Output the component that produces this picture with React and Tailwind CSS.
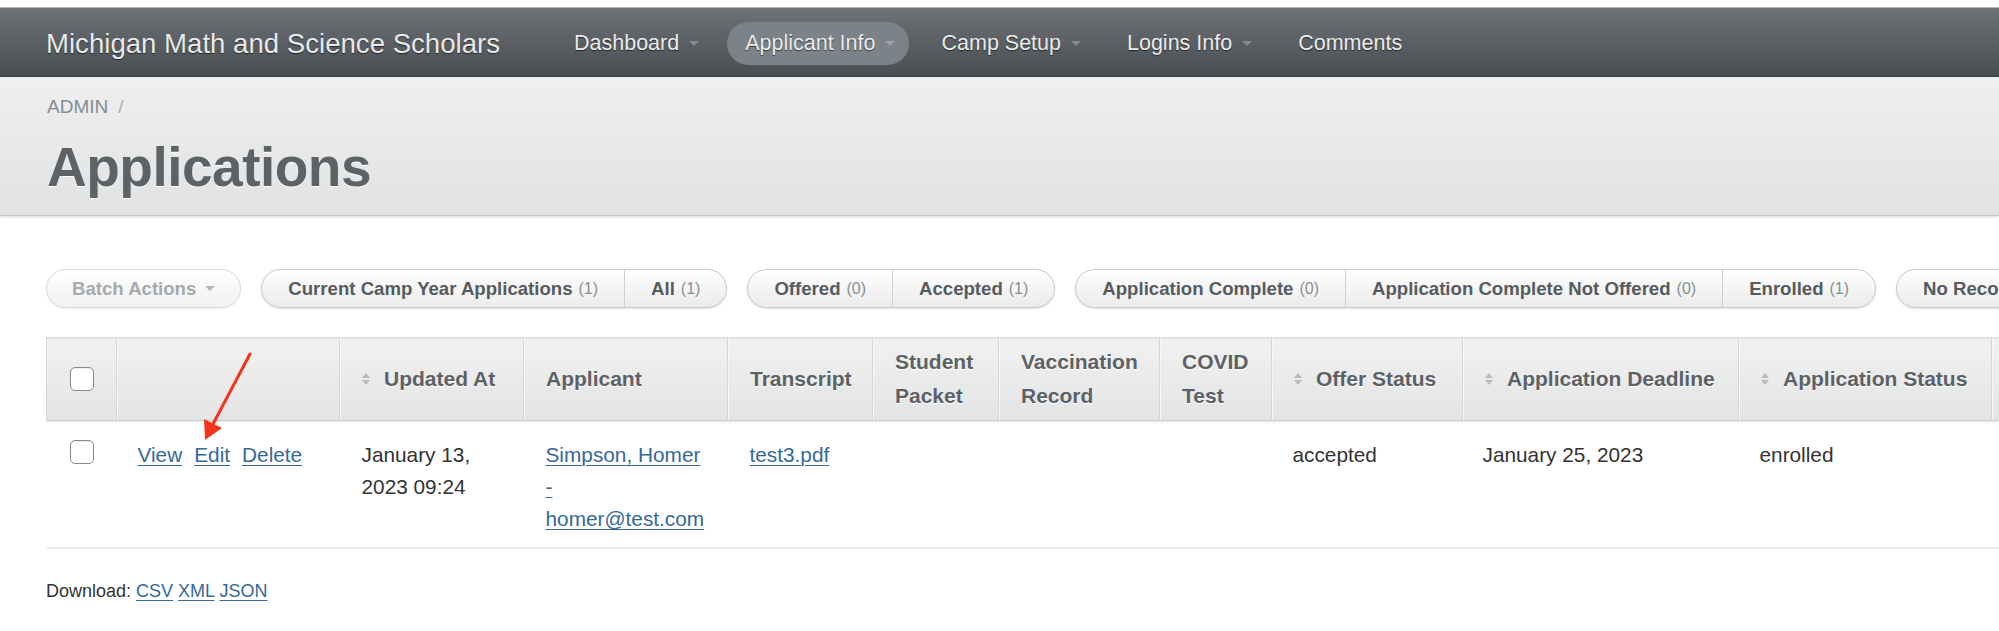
import React from "react";

const FONT = "font-['Liberation_Sans',Arial,sans-serif]";

function Caret({ color = "border-t-[#8b9095]", className = "" }) {
  return (
    <span
      className={`inline-block w-0 h-0 border-l-[5px] border-r-[5px] border-t-[5px] border-l-transparent border-r-transparent ${color} ${className}`}
    />
  );
}

function SortArrows() {
  return (
    <span className="inline-flex flex-col gap-[2px] mr-[14px] shrink-0">
      <span className="w-0 h-0 border-l-[4px] border-r-[4px] border-b-[5px] border-l-transparent border-r-transparent border-b-[#b9bcbf]" />
      <span className="w-0 h-0 border-l-[4px] border-r-[4px] border-t-[5px] border-l-transparent border-r-transparent border-t-[#b9bcbf]" />
    </span>
  );
}

function Checkbox() {
  return (
    <span className="block w-[24px] h-[24px] rounded-[5px] border-[1.5px] border-[#8a8a8a] bg-white shadow-[inset_0_1px_1px_rgba(0,0,0,0.08)]" />
  );
}

function NavItem({ label, active, caret = true }) {
  return (
    <div
      className={`flex items-center h-[43px] pl-[18px] ${caret ? "pr-[14px]" : "pr-[18px]"} rounded-full ${
        active ? "bg-[#7b8288]" : ""
      }`}
    >
      <span className="text-[21.5px] text-[#ececec] [text-shadow:0_1px_1px_rgba(0,0,0,0.6)]">{label}</span>
      {caret && <Caret className="ml-[10px]" color={active ? "border-t-[#9da3a8]" : "border-t-[#858a8f]"} />}
    </div>
  );
}

function Seg({ label, count, first }) {
  return (
    <div
      className={`flex items-center px-[26px] ${first ? "" : "border-l border-[#cfcfcf]"} text-[18.6px] font-bold text-[#565b60]`}
    >
      {label}
      <span className="ml-[6px] font-normal text-[16px] text-[#8a8e92]">({count})</span>
    </div>
  );
}

function Group({ items }) {
  return (
    <div className="flex h-[39px] shrink-0 rounded-full border border-[#c9c9c9] bg-linear-to-b from-white to-[#ebebeb] shadow-[0_1px_2px_rgba(0,0,0,0.12)] overflow-hidden">
      {items.map((it, i) => (
        <Seg key={it[0]} label={it[0]} count={it[1]} first={i === 0} />
      ))}
    </div>
  );
}

function Th({ children, w, sort, first }) {
  return (
    <th
      className={`${w} px-[22px] text-left align-middle font-bold text-[21px] leading-[34px] text-[#5c6166] [text-shadow:0_1px_0_#fff] ${
        first ? "" : "border-l border-[#d5d6d7] shadow-[inset_1px_0_0_#f7f7f7]"
      }`}
    >
      {sort ? (
        <span className="flex items-center whitespace-nowrap">
          <SortArrows />
          {children}
        </span>
      ) : (
        children
      )}
    </th>
  );
}

const link = "text-[#35699a] underline underline-offset-[3px] decoration-[1px]";

export default function App() {
  return (
    <div className={`${FONT} relative w-[1999px] h-[631px] overflow-hidden bg-white`}>
      {/* Top nav */}
      <div className="mt-[7px] h-[70px] flex items-center pt-[3px] px-[46px] bg-linear-to-b from-[#6d7277] to-[#4a4e52] border-t border-[#b4b7ba] border-b border-b-[#3d4043]">
        <span className="text-[27.6px] text-[#e9e9e9] whitespace-nowrap [text-shadow:0_1px_1px_rgba(0,0,0,0.6)]">
          Michigan Math and Science Scholars
        </span>
        <div className="flex items-center gap-[14px] ml-[56px] whitespace-nowrap">
          <NavItem label="Dashboard" />
          <NavItem label="Applicant Info" active />
          <NavItem label="Camp Setup" />
          <NavItem label="Logins Info" />
          <NavItem label="Comments" caret={false} />
        </div>
      </div>

      {/* Breadcrumb band */}
      <div className="pl-[47px] pt-[18px] pb-[20px] bg-linear-to-b from-[#efefef] to-[#e1e2e3] border-b border-[#c3c5c7] shadow-[0_1px_3px_rgba(0,0,0,0.15)]">
        <div className="text-[19px] leading-[24px] text-[#868c93]">
          ADMIN<span className="ml-[10px] text-[#a8adb2]">/</span>
        </div>
        <h1 className="mt-[21px] text-[55px] leading-none font-bold tracking-[-0.5px] text-[#5d6267] [text-shadow:0_1px_0_#fff]">
          Applications
        </h1>
      </div>

      {/* Filter buttons */}
      <div className="flex gap-[20px] mt-[53px] pl-[46px] whitespace-nowrap">
        <div className="flex items-center h-[39px] shrink-0 px-[25px] rounded-full border border-[#dadada] bg-linear-to-b from-white to-[#f1f1f1] shadow-[0_1px_2px_rgba(0,0,0,0.08)] text-[18.6px] font-bold text-[#a6aaae]">
          Batch Actions
          <Caret className="ml-[9px]" color="border-t-[#b3b7bb]" />
        </div>
        <Group items={[["Current Camp Year Applications", 1], ["All", 1]]} />
        <Group items={[["Offered", 0], ["Accepted", 1]]} />
        <Group
          items={[
            ["Application Complete", 0],
            ["Application Complete Not Offered", 0],
            ["Enrolled", 1],
          ]}
        />
        <Group items={[["No Records", 0]]} />
      </div>

      {/* Table */}
      <div className="mt-[29px] pl-[46px]">
        <table className="table-fixed border-collapse w-[2100px]">
          <thead>
            <tr className="h-[83px] bg-linear-to-b from-[#f1f1f1] to-[#e3e4e5] border border-[#dadbdc] border-b-[#c9cacb] shadow-[0_1px_2px_rgba(0,0,0,0.1)]">
              <th className="w-[70px] align-middle">
                <div className="flex justify-center">
                  <Checkbox />
                </div>
              </th>
              <Th w="w-[223px]"></Th>
              <Th w="w-[184px]" sort>Updated At</Th>
              <Th w="w-[204px]">Applicant</Th>
              <Th w="w-[145px]">Transcript</Th>
              <Th w="w-[126px]">Student<br />Packet</Th>
              <Th w="w-[161px]">Vaccination<br />Record</Th>
              <Th w="w-[112px]">COVID<br />Test</Th>
              <Th w="w-[191px]" sort>Offer Status</Th>
              <Th w="w-[276px]" sort>Application Deadline</Th>
              <Th w="w-[253px]" sort>Application Status</Th>
              <Th w="w-[155px]" sort>Created</Th>
            </tr>
          </thead>
          <tbody>
            <tr className="border-b-2 border-[#e9e9e9] align-top text-[20.8px] leading-[32px] text-[#333]">
              <td className="pt-[18px] pb-[12px]">
                <div className="flex justify-center pt-[1px]">
                  <Checkbox />
                </div>
              </td>
              <td className="pt-[18px] pb-[12px] px-[21px] whitespace-nowrap">
                <a className={`${link} mr-[12px]`}>View</a>
                <a className={`${link} mr-[12px]`}>Edit</a>
                <a className={link}>Delete</a>
              </td>
              <td className="pt-[18px] pb-[12px] px-[22px]">
                January 13,
                <br />
                2023 09:24
              </td>
              <td className="pt-[18px] pb-[12px] px-[22px]">
                <a className={link}>
                  Simpson, Homer
                  <br />-<br />
                  homer@test.com
                </a>
              </td>
              <td className="pt-[18px] pb-[12px] px-[22px]">
                <a className={link}>test3.pdf</a>
              </td>
              <td className="px-[22px]"></td>
              <td className="px-[22px]"></td>
              <td className="px-[22px]"></td>
              <td className="pt-[18px] pb-[12px] px-[21px]">accepted</td>
              <td className="pt-[18px] pb-[12px] px-[20px]">January 25, 2023</td>
              <td className="pt-[18px] pb-[12px] px-[21px]">enrolled</td>
              <td></td>
            </tr>
          </tbody>
        </table>
        <div className="mt-[30px] text-[18px] leading-[24px] text-[#333]">
          Download: <a className={link}>CSV</a> <a className={link}>XML</a> <a className={link}>JSON</a>
        </div>
      </div>

      {/* Red annotation arrow */}
      <svg className="absolute left-0 top-0 pointer-events-none" width="1999" height="631">
        <line x1="250" y1="354" x2="213" y2="424" stroke="#f5331d" strokeWidth="3" strokeLinecap="round" />
        <polygon points="205,440 204,419 222,428" fill="#f5331d" />
      </svg>
    </div>
  );
}
